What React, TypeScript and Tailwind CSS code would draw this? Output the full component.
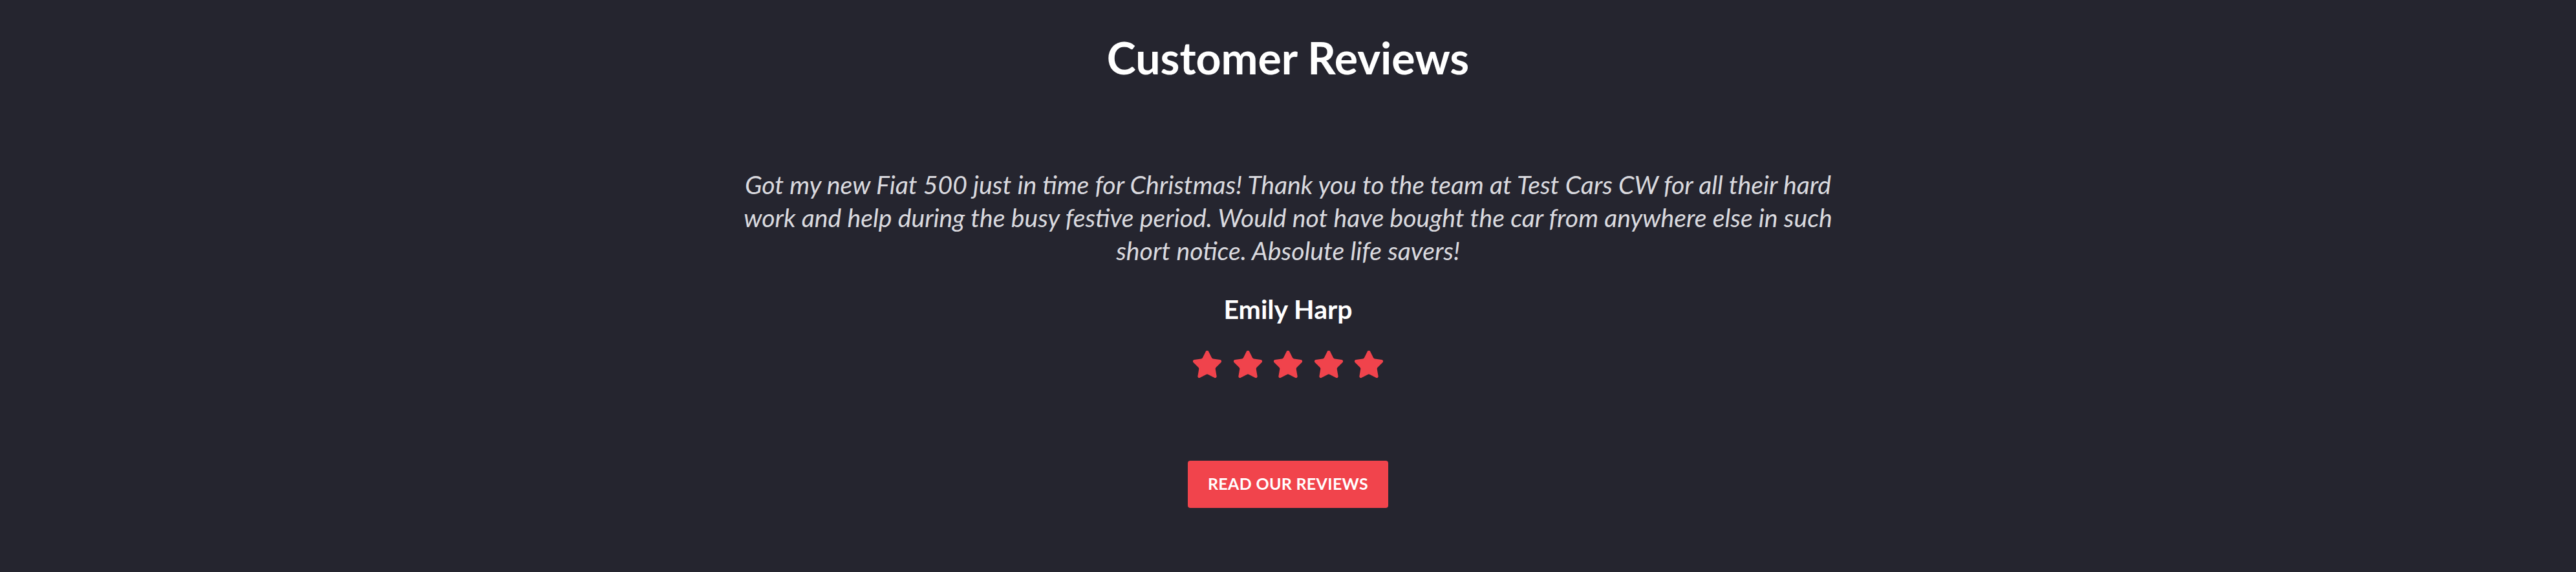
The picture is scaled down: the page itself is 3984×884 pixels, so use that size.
import React from 'react';

const review = {
  text: 'Got my new Fiat 500 just in time for Christmas! Thank you to the team at Test Cars CW for all their hard work and help during the busy festive period. Would not have bought the car from anywhere else in such short notice. Absolute life savers!',
  name: 'Emily Harp',
  rating: 5,
};

function Star() {
  return (
    <svg width="44" height="42" viewBox="1.5 1.6 21 20" fill="#f0434c" stroke="#f0434c" strokeWidth="1.2" strokeLinejoin="round">
      <path d="M11.525 2.295a.53.53 0 0 1 .95 0l2.31 4.679a2.123 2.123 0 0 0 1.595 1.16l5.166.756a.53.53 0 0 1 .294.904l-3.736 3.638a2.123 2.123 0 0 0-.611 1.878l.882 5.14a.53.53 0 0 1-.771.56l-4.618-2.428a2.122 2.122 0 0 0-1.973 0L6.396 21.01a.53.53 0 0 1-.77-.56l.881-5.139a2.122 2.122 0 0 0-.611-1.879L2.16 9.795a.53.53 0 0 1 .294-.906l5.165-.755a2.122 2.122 0 0 0 1.597-1.16z" />
    </svg>
  );
}

export default function App() {
  return (
    <section
      className="w-full min-h-[884px] bg-[#25252f] flex flex-col items-center pt-12 pb-[99px] text-center"
      style={{ fontFamily: 'Lato, "Open Sans", sans-serif' }}
    >
      <h2 className="text-[68px] leading-[1.2] font-bold text-white">Customer Reviews</h2>

      <div className="mt-[129px] max-w-[1730px] flex flex-col items-center">
        <p className="text-[39.2px] leading-[51px] italic text-[#dadadf]">{review.text}</p>
        <h3 className="mt-[42px] text-[41px] leading-[48px] font-bold text-white">{review.name}</h3>
        <div className="mt-[40px] flex gap-[18.5px]">
          {Array.from({ length: review.rating }).map((_, i) => (
            <Star key={i} />
          ))}
        </div>
      </div>

      <button className="mt-[128px] h-[73px] px-[31px] rounded-[4px] bg-[#f1444c] text-white text-[25px] font-bold tracking-[0.3px] uppercase">
        Read our reviews
      </button>
    </section>
  );
}
